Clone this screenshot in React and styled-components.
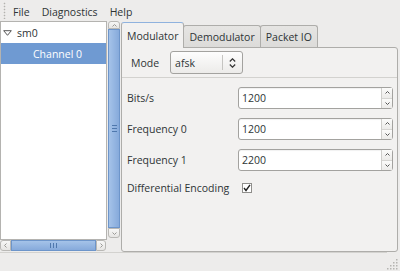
import React from 'react';
import styled, { createGlobalStyle, css } from 'styled-components';

const Global = createGlobalStyle`
  html, body { margin: 0; padding: 0; background: #edeceb; }
  body {
    font-family: "Open Sans", "DejaVu Sans", sans-serif;
    font-size: 10.5px;
    color: #2e3436;
  }
  #root { width: 400px; height: 271px; }
`;

const Window = styled.div`
  width: 400px;
  height: 271px;
  display: flex;
  flex-direction: column;
  background: #edeceb;
  overflow: hidden;
`;

const MenuBar = styled.div`
  height: 21px;
  flex: none;
  display: flex;
  align-items: center;
  padding-left: 3px;
  box-sizing: border-box;
`;

const Grip = styled.div`
  width: 3px;
  height: 17px;
  margin-right: 1px;
  background-image: radial-gradient(circle, #b3b2af 0.7px, transparent 1.1px);
  background-size: 3px 3px;
`;

const MenuItem = styled.div`
  padding: 2px 6px 0;
  line-height: 20px;
  height: 21px;
  box-sizing: border-box;
`;

const Main = styled.div`
  flex: none;
  height: 231px;
  display: flex;
`;

const LeftPane = styled.div`
  width: 121px;
  flex: none;
  display: flex;
`;

const TreeCol = styled.div`
  width: 107px;
  flex: none;
  display: flex;
  flex-direction: column;
`;

const Tree = styled.div`
  height: 219px;
  box-sizing: border-box;
  background: #fff;
  border: 1px solid #b4b3b0;
  display: flex;
  flex-direction: column;
`;

const TreeRow = styled.div`
  height: 21px;
  flex: none;
  display: flex;
  align-items: center;
  gap: 5px;
  padding-top: 1px;
  box-sizing: border-box;
  padding-left: ${p => p.$indent}px;
  ${p => p.$selected && css`
    background: #6f9ad2;
    color: #fff;
  `}
`;

const HScroll = styled.div`
  width: 106px;
  height: 11px;
  display: flex;
  box-sizing: border-box;
`;

const VScroll = styled.div`
  width: 12px;
  height: 217px;
  margin-left: 1px;
  display: flex;
  flex-direction: column;
  box-sizing: border-box;
`;

const ArrowBtn = styled.div`
  flex: none;
  ${p => p.$vertical ? css`height: ${p.$size}px;` : css`width: ${p.$size}px;`}
  box-sizing: border-box;
  border: 1px solid #b9b8b5;
  background: linear-gradient(#f7f7f6, #e6e5e3);
  display: flex;
  align-items: center;
  justify-content: center;
  border-radius: ${p => p.$radius};
`;

const Slider = styled.div`
  flex: 1;
  box-sizing: border-box;
  border: 1px solid #6d95ca;
  background: ${p => p.$vertical
    ? 'linear-gradient(90deg, #a5c3e9, #86aadb)'
    : 'linear-gradient(#a5c3e9, #86aadb)'};
  display: flex;
  align-items: center;
  justify-content: center;
`;

const Notebook = styled.div`
  flex: 1;
  margin-right: 2px;
  display: flex;
  flex-direction: column;
`;

const TabBar = styled.div`
  height: 26px;
  flex: none;
  display: flex;
  align-items: flex-end;
`;

const Tab = styled.div`
  box-sizing: border-box;
  padding: 0 5px;
  display: flex;
  align-items: center;
  border: 1px solid #aeadaa;
  border-bottom: none;
  border-radius: 3px 3px 0 0;
  margin-right: -1px;
  ${p => p.$active ? css`
    height: 26px;
    margin-bottom: -1px;
    background: #f2f1f0;
    border-top-color: #8fb2de;
    position: relative;
    z-index: 1;
    padding-top: 1px;
  ` : css`
    height: 22px;
    background: linear-gradient(#e6e5e3, #dcdbd9);
    padding-top: 1px;
  `}
`;

const Pane = styled.div`
  flex: 1;
  box-sizing: border-box;
  background: #f2f1f0;
  border: 1px solid #aeadaa;
  border-radius: 0 3px 3px 3px;
  display: flex;
  flex-direction: column;
`;

const ModeRow = styled.div`
  height: 30px;
  flex: none;
  box-sizing: border-box;
  border-bottom: 1px solid #d3d2cf;
  display: flex;
  align-items: center;
  padding-left: 9px;
  gap: 11px;
`;

const Combo = styled.div`
  width: 73px;
  height: 23px;
  box-sizing: border-box;
  border: 1px solid #a3a29f;
  border-radius: 3px;
  background: linear-gradient(#fdfdfd, #ecebe9);
  display: flex;
  align-items: center;
`;

const ComboText = styled.div`
  flex: 1;
  padding-left: 4px;
`;

const ComboArrows = styled.div`
  width: 19px;
  height: 15px;
  border-left: 1px solid #c5c4c1;
  display: flex;
  align-items: center;
  justify-content: center;
`;

const Form = styled.div`
  display: grid;
  grid-template-columns: 111px 155px;
  grid-template-rows: 22px 22px 22px 16px;
  row-gap: 9px;
  padding: 9px 0 0 5px;
  align-items: center;
`;

const Label = styled.div``;

const Spin = styled.div`
  height: 22px;
  box-sizing: border-box;
  border: 1px solid #a3a29f;
  border-radius: 3px;
  background: #fff;
  box-shadow: inset 0 1px 1px rgba(0,0,0,0.06);
  display: flex;
`;

const SpinValue = styled.div`
  flex: 1;
  padding-left: 3px;
  display: flex;
  align-items: center;
`;

const Steppers = styled.div`
  width: 10px;
  border-left: 1px solid #cfcecb;
  display: flex;
  flex-direction: column;
`;

const Step = styled.div`
  flex: 1;
  display: flex;
  align-items: center;
  justify-content: center;
  background: linear-gradient(#fbfbfa, #ecebe9);
  & + & { border-top: 1px solid #d6d5d2; }
`;

const CheckRow = styled.div`
  height: 16px;
  display: flex;
  align-items: center;
`;

const CheckBox = styled.div`
  width: 10px;
  height: 10px;
  margin-left: 4px;
  box-sizing: border-box;
  border: 1px solid #8f8e8b;
  background: #fff;
  display: flex;
  align-items: center;
  justify-content: center;
`;

const StatusBar = styled.div`
  flex: 1;
  position: relative;
`;

const StatusLine = styled.div`
  height: 1px;
  margin-right: 13px;
  background: #d3d2cf;
`;

const ResizeGrip = styled.svg`
  position: absolute;
  right: 2px;
  bottom: 1px;
`;

const Chevron = ({ dir = 'down', w = 5, h = 3, color = '#555' }) => {
  const paths = {
    down: `M0.5 0.5 L${w / 2} ${h - 0.5} L${w - 0.5} 0.5`,
    up: `M0.5 ${h - 0.5} L${w / 2} 0.5 L${w - 0.5} ${h - 0.5}`,
    left: `M${w - 0.5} 0.5 L0.5 ${h / 2} L${w - 0.5} ${h - 0.5}`,
    right: `M0.5 0.5 L${w - 0.5} ${h / 2} L0.5 ${h - 0.5}`,
  };
  return (
    <svg width={w} height={h} viewBox={`0 0 ${w} ${h}`}>
      <path d={paths[dir]} fill="none" stroke={color} strokeWidth="1" />
    </svg>
  );
};

const SpinBox = ({ value }) => (
  <Spin>
    <SpinValue>{value}</SpinValue>
    <Steppers>
      <Step><Chevron dir="up" /></Step>
      <Step><Chevron dir="down" /></Step>
    </Steppers>
  </Spin>
);

export default function App() {
  return (
    <>
      <Global />
      <Window>
        <MenuBar>
          <Grip />
          <MenuItem>File</MenuItem>
          <MenuItem>Diagnostics</MenuItem>
          <MenuItem>Help</MenuItem>
        </MenuBar>
        <Main>
          <LeftPane>
            <TreeCol>
              <Tree>
                <TreeRow $indent={2}>
                  <svg width="9" height="6" viewBox="0 0 9 6">
                    <path d="M0.7 0.7 H8.3 L4.5 5.3 Z" fill="none" stroke="#555" strokeWidth="1" />
                  </svg>
                  sm0
                </TreeRow>
                <TreeRow $indent={32} $selected>Channel 0</TreeRow>
              </Tree>
              <HScroll>
                <ArrowBtn $size={11} $radius="3px 0 0 3px"><Chevron dir="left" w={3} h={5} color="#9a9996" /></ArrowBtn>
                <Slider>
                  <svg width="7" height="5" viewBox="0 0 7 5">
                    <path d="M0.5 0 V5 M3.5 0 V5 M6.5 0 V5" stroke="#4f78ad" strokeWidth="1" />
                  </svg>
                </Slider>
                <ArrowBtn $size={10} $radius="0 3px 3px 0"><Chevron dir="right" w={3} h={5} color="#9a9996" /></ArrowBtn>
              </HScroll>
            </TreeCol>
            <VScroll>
              <ArrowBtn $vertical $size={8} $radius="3px 3px 0 0"><Chevron dir="up" color="#9a9996" /></ArrowBtn>
              <Slider $vertical>
                <svg width="5" height="7" viewBox="0 0 5 7">
                  <path d="M0 0.5 H5 M0 3.5 H5 M0 6.5 H5" stroke="#4f78ad" strokeWidth="1" />
                </svg>
              </Slider>
              <ArrowBtn $vertical $size={10} $radius="0 0 3px 3px"><Chevron dir="down" color="#9a9996" /></ArrowBtn>
            </VScroll>
          </LeftPane>
          <Notebook>
            <TabBar>
              <Tab $active>Modulator</Tab>
              <Tab>Demodulator</Tab>
              <Tab>Packet IO</Tab>
            </TabBar>
            <Pane>
              <ModeRow>
                <Label>Mode</Label>
                <Combo>
                  <ComboText>afsk</ComboText>
                  <ComboArrows>
                    <svg width="7" height="10" viewBox="0 0 7 10">
                      <path d="M0.8 3.5 L3.5 0.8 L6.2 3.5 M0.8 6.5 L3.5 9.2 L6.2 6.5" fill="none" stroke="#333" strokeWidth="1.2" />
                    </svg>
                  </ComboArrows>
                </Combo>
              </ModeRow>
              <Form>
                <Label>Bits/s</Label>
                <SpinBox value="1200" />
                <Label>Frequency 0</Label>
                <SpinBox value="1200" />
                <Label>Frequency 1</Label>
                <SpinBox value="2200" />
                <Label>Differential Encoding</Label>
                <CheckRow>
                  <CheckBox>
                    <svg width="8" height="8" viewBox="0 0 8 8">
                      <path d="M1 4 L3 6.5 L7 0.8" fill="none" stroke="#222" strokeWidth="1.4" />
                    </svg>
                  </CheckBox>
                </CheckRow>
              </Form>
            </Pane>
          </Notebook>
        </Main>
        <StatusBar>
          <StatusLine />
          <ResizeGrip width="13" height="13" viewBox="0 0 13 13">
            {[[11, 2], [8, 5], [11, 5], [5, 8], [8, 8], [11, 8], [2, 11], [5, 11], [8, 11], [11, 11]].map(([x, y]) => (
              <rect key={`${x}-${y}`} x={x} y={y} width="1.5" height="1.5" fill="#b5b4b1" />
            ))}
          </ResizeGrip>
        </StatusBar>
      </Window>
    </>
  );
}
